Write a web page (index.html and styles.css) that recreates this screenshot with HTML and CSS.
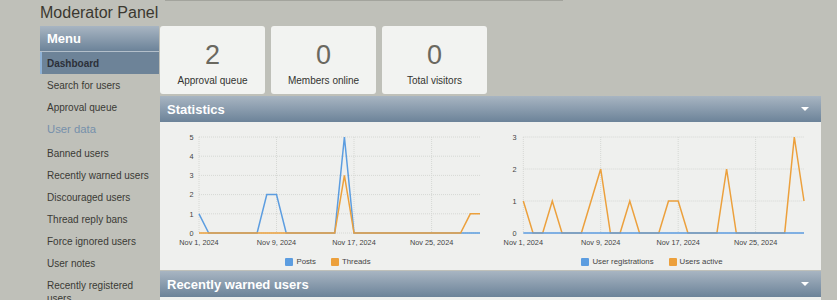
FILE: index.html
```html
<!DOCTYPE html>
<html lang="en">
<head>
<meta charset="utf-8">
<title>Moderator Panel</title>
<link rel="stylesheet" href="styles.css">
</head>
<body>
<div class="page">
  <div class="topline"></div>
  <h1 class="title">Moderator Panel</h1>
  <div class="layout">
    <nav class="sidebar">
      <div class="menu-head">Menu</div>
      <a class="menu-item active">Dashboard</a>
      <a class="menu-item">Search for users</a>
      <a class="menu-item">Approval queue</a>
      <div class="menu-section">User data</div>
      <a class="menu-item">Banned users</a>
      <a class="menu-item">Recently warned users</a>
      <a class="menu-item">Discouraged users</a>
      <a class="menu-item">Thread reply bans</a>
      <a class="menu-item">Force ignored users</a>
      <a class="menu-item">User notes</a>
      <a class="menu-item">Recently registered users</a>
    </nav>
    <main class="main">
      <div class="stats">
        <div class="stat"><div class="stat-num">2</div><div class="stat-label">Approval queue</div></div>
        <div class="stat"><div class="stat-num">0</div><div class="stat-label">Members online</div></div>
        <div class="stat"><div class="stat-num">0</div><div class="stat-label">Total visitors</div></div>
      </div>
      <section class="panel">
        <div class="panel-head"><span>Statistics</span><span class="caret"></span></div>
        <div class="panel-body charts">
          <div class="chart">
            <svg class="chart-svg" width="330" height="125" viewBox="0 0 330 125">
              <g class="grid">
                <line x1="39" y1="12" x2="320" y2="12"/>
                <line x1="39" y1="31.2" x2="320" y2="31.2"/>
                <line x1="39" y1="50.4" x2="320" y2="50.4"/>
                <line x1="39" y1="69.6" x2="320" y2="69.6"/>
                <line x1="39" y1="88.8" x2="320" y2="88.8"/>
                <line x1="39" y1="108" x2="320" y2="108"/>
                <line x1="39" y1="12" x2="39" y2="108"/>
                <line x1="116.5" y1="12" x2="116.5" y2="108"/>
                <line x1="194" y1="12" x2="194" y2="108"/>
                <line x1="271.6" y1="12" x2="271.6" y2="108"/>
              </g>
              <g class="ylabels">
                <text x="33.5" y="14.7">5</text>
                <text x="33.5" y="33.9">4</text>
                <text x="33.5" y="53.1">3</text>
                <text x="33.5" y="72.3">2</text>
                <text x="33.5" y="91.5">1</text>
                <text x="33.5" y="110.7">0</text>
              </g>
              <g class="xlabels">
                <text x="39" y="120">Nov 1, 2024</text>
                <text x="116.5" y="120">Nov 9, 2024</text>
                <text x="194" y="120">Nov 17, 2024</text>
                <text x="271.6" y="120">Nov 25, 2024</text>
              </g>
              <polyline class="line blue" points="39,88.8 48.7,108 97.1,108 106.8,69.6 116.5,69.6 126.2,108 174.7,108 184.4,12 194,108 320,108"/>
              <polyline class="line orange" points="39,108 174.7,108 184.4,50.4 194,108 300.6,108 310.3,88.8 320,88.8"/>
            </svg>
            <div class="legend legend-left">
              <span class="key"><i class="sw sw-blue"></i>Posts</span>
              <span class="key"><i class="sw sw-orange"></i>Threads</span>
            </div>
          </div>
          <div class="chart">
            <svg class="chart-svg" width="331" height="125" viewBox="0 0 331 125">
              <g class="grid">
                <line x1="33.3" y1="12" x2="314" y2="12"/>
                <line x1="33.3" y1="44" x2="314" y2="44"/>
                <line x1="33.3" y1="76" x2="314" y2="76"/>
                <line x1="33.3" y1="108" x2="314" y2="108"/>
                <line x1="33.3" y1="12" x2="33.3" y2="108"/>
                <line x1="110.7" y1="12" x2="110.7" y2="108"/>
                <line x1="188.2" y1="12" x2="188.2" y2="108"/>
                <line x1="265.6" y1="12" x2="265.6" y2="108"/>
              </g>
              <g class="ylabels">
                <text x="26.5" y="14.7">3</text>
                <text x="26.5" y="46.7">2</text>
                <text x="26.5" y="78.7">1</text>
                <text x="26.5" y="110.7">0</text>
              </g>
              <g class="xlabels">
                <text x="33.3" y="120">Nov 1, 2024</text>
                <text x="110.7" y="120">Nov 9, 2024</text>
                <text x="188.2" y="120">Nov 17, 2024</text>
                <text x="265.6" y="120">Nov 25, 2024</text>
              </g>
              <polyline class="line orange" points="33.3,76 43,108 52.7,108 62.3,76 72,108 91.4,108 110.7,44 120.4,108 130.1,108 139.8,76 149.5,108 168.8,108 178.5,76 188.2,76 197.9,108 226.9,108 236.6,44 246.3,108 294.7,108 304.3,12 314,76"/>
              <polyline class="line blue" points="33.3,108 314,108"/>
            </svg>
            <div class="legend legend-right">
              <span class="key"><i class="sw sw-blue"></i>User registrations</span>
              <span class="key"><i class="sw sw-orange"></i>Users active</span>
            </div>
          </div>
        </div>
      </section>
      <section class="panel panel-next">
        <div class="panel-head"><span>Recently warned users</span><span class="caret"></span></div>
        <div class="panel-body"></div>
      </section>
    </main>
  </div>
</div>
</body>
</html>
```

FILE: styles.css
```css
html, body {
  margin: 0;
  padding: 0;
  background: #bfc0b9;
  overflow: hidden;
}

body {
  font-family: "Liberation Sans", Arial, sans-serif;
  color: #3a3a35;
}

.page {
  padding-left: 40px;
}

.topline {
  margin-left: 125px;
  width: 398px;
  height: 0;
  border-top: 1px solid #a3a49d;
}

.title {
  margin: 3px 0 0 0;
  font-size: 16px;
  line-height: 18px;
  font-weight: normal;
  color: #3b3830;
}

.layout {
  display: flex;
  gap: 1px;
  margin-top: 4px;
}

.sidebar {
  width: 119px;
  flex: none;
}

.menu-head {
  height: 25px;
  line-height: 25px;
  padding: 0 7px;
  background: linear-gradient(#a8b5c2, #6c8399);
  color: #ffffff;
  font-weight: bold;
  font-size: 13px;
  border-bottom: 1px solid #b3bfca;
}

.menu-item {
  display: block;
  padding: 4.5px 7px;
  line-height: 13px;
  font-size: 10px;
  color: #3a3a35;
  text-decoration: none;
}

.menu-item.active {
  background: #6d8398;
  border-left: 2px solid #8fb2d6;
  padding-left: 5px;
  font-weight: bold;
  color: #2c3038;
}

.menu-section {
  padding: 5px 7px 6px;
  line-height: 13px;
  font-size: 11.3px;
  color: #7690ab;
}

.main {
  width: 661px;
  flex: none;
}

.stats {
  display: flex;
  gap: 6px;
}

.stat {
  width: 105px;
  height: 68px;
  box-sizing: border-box;
  padding-top: 14px;
  background: #f2f3f1;
  border-radius: 3px;
  text-align: center;
}

.stat-num {
  font-size: 27px;
  line-height: 30px;
  color: #6a6860;
}

.stat-label {
  margin-top: 5px;
  font-size: 10px;
  line-height: 12px;
  color: #333330;
}

.panel {
  margin-top: 2px;
}

.panel-next {
  margin-top: 1px;
}

.panel-head {
  height: 26px;
  padding: 0 7px;
  display: flex;
  align-items: center;
  justify-content: space-between;
  background: linear-gradient(#a8b5c2, #6c8399);
  color: #ffffff;
  font-weight: bold;
  font-size: 13px;
}

.caret {
  width: 0;
  height: 0;
  margin-right: 5px;
  border-left: 4px solid transparent;
  border-right: 4px solid transparent;
  border-top: 4px solid #ffffff;
}

.panel-body {
  background: #eff0ee;
  min-height: 40px;
}

.charts {
  display: flex;
  padding: 3px 0 3px;
}

.chart {
  flex: 1;
}

.chart-svg {
  display: block;
}

.grid line {
  stroke: #d6d8d4;
  stroke-width: 1;
  stroke-dasharray: 1 1;
}

.ylabels text {
  font-family: "Liberation Sans", Arial, sans-serif;
  font-size: 7.3px;
  fill: #444444;
  text-anchor: end;
}

.xlabels text {
  font-family: "Liberation Sans", Arial, sans-serif;
  font-size: 7.3px;
  fill: #444444;
  text-anchor: middle;
}

.line {
  fill: none;
  stroke-width: 1.5;
  stroke-linejoin: miter;
}

.line.blue {
  stroke: #5c9de0;
}

.line.orange {
  stroke: #eca03c;
}

.legend {
  margin-top: 7px;
  height: 10px;
  display: flex;
  justify-content: center;
  gap: 15px;
  font-size: 7.8px;
  line-height: 10px;
  color: #444444;
}

.legend-left {
  padding-left: 6px;
}

.legend-right {
  padding-right: 7px;
}

.key {
  display: flex;
  align-items: center;
  gap: 3px;
}

.sw {
  display: block;
  width: 8px;
  height: 8px;
  border-radius: 1px;
}

.sw-blue {
  background: #5c9de0;
}

.sw-orange {
  background: #eca03c;
}
```
